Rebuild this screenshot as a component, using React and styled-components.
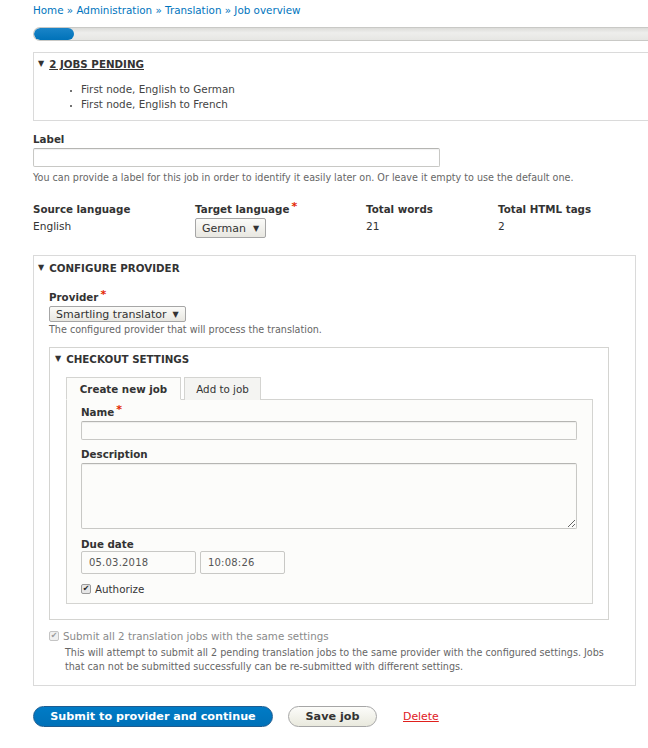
import React from "react";
import styled, { createGlobalStyle } from "styled-components";

const GlobalStyle = createGlobalStyle`
  html, body {
    margin: 0;
    padding: 0;
    background: #fff;
  }
  body {
    font-family: "DejaVu Sans", Verdana, sans-serif;
    color: #333;
    font-size: 10px;
    overflow: hidden;
  }
`;

const Page = styled.div`
  width: 648px;
  height: 748px;
  overflow: hidden;
  box-sizing: border-box;
  padding: 4px 0 0 33px;
`;

const Breadcrumb = styled.nav`
  font-size: 10.35px;
  line-height: 12px;
  color: #0074bd;
  white-space: nowrap;
`;

const Crumb = styled.a`
  color: #0074bd;
  text-decoration: none;
`;

const Progress = styled.div`
  margin-top: 11px;
  width: 640px;
  height: 14px;
  box-sizing: border-box;
  border: 1px solid #c9c9c6;
  border-right: none;
  border-radius: 8px 0 0 8px;
  background: linear-gradient(#dcdcd9, #eeeeec 40%, #e6e6e3);
  overflow: hidden;
`;

const ProgressFill = styled.div`
  height: 100%;
  background: linear-gradient(#1a84c8, #0072b9);
  border-radius: 8px;
`;

const Box = styled.section`
  margin-top: ${(p) => p.$top || 0}px;
  width: ${(p) => p.$width}px;
  box-sizing: border-box;
  border: 1px solid ${(p) => p.$border || "#dadada"};
  background: ${(p) => p.$bg || "#fff"};
  padding-bottom: ${(p) => p.$bottom || 0}px;
`;

const Legend = styled.div`
  display: flex;
  align-items: center;
  gap: 5px;
  padding: ${(p) => p.$pad};
  font-size: 10.3px;
  line-height: 12px;
  font-weight: bold;
  text-transform: uppercase;
  color: #333;
  white-space: nowrap;
  span {
    text-decoration: ${(p) => (p.$link ? "underline" : "none")};
  }
`;

const Arrow = styled.i`
  font-style: normal;
  font-size: 8px;
  line-height: 12px;
  color: #333;
`;

const JobList = styled.ul`
  margin: 12px 0 0;
  padding-left: 47px;
  font-size: 10.4px;
  line-height: 15px;
  color: #444;
  li::marker {
    font-size: 8px;
  }
`;

const BoxBody = styled.div`
  padding: ${(p) => p.$pad};
`;

const FieldLabel = styled.label`
  display: block;
  margin-top: ${(p) => p.$top || 0}px;
  font-size: 10.3px;
  line-height: 12px;
  font-weight: bold;
  color: #333;
  white-space: nowrap;
`;

const Req = styled.sup`
  color: #e32700;
  font-size: 11px;
  vertical-align: 3px;
  margin-left: 2px;
  line-height: 0;
`;

const TextInput = styled.div`
  margin-top: 3px;
  width: ${(p) => p.$width}px;
  height: ${(p) => p.$height || 19}px;
  box-sizing: border-box;
  border: 1px solid #c8c8c5;
  border-top-color: #b5b5b2;
  border-radius: 2px;
  background: ${(p) => p.$bg || "#fff"};
  box-shadow: inset 0 1px 1px rgba(0, 0, 0, 0.06);
`;

const TextArea = styled.textarea`
  display: block;
  margin-top: 3px;
  width: ${(p) => p.$width}px;
  height: 66px;
  box-sizing: border-box;
  border: 1px solid #c8c8c5;
  border-top-color: #b5b5b2;
  border-radius: 2px;
  background: #fcfcfa;
  box-shadow: inset 0 1px 1px rgba(0, 0, 0, 0.06);
  font: inherit;
  outline: none;
`;

const Description = styled.div`
  margin-top: ${(p) => p.$top || 0}px;
  font-size: 9.6px;
  line-height: ${(p) => p.$lh || 12}px;
  color: #666;
  padding-left: ${(p) => p.$indent || 0}px;
`;

const InfoGrid = styled.div`
  margin-top: 19px;
  display: grid;
  grid-template-columns: 162px 171px 132px 1fr;
`;

const InfoCol = styled.div`
  display: flex;
  flex-direction: column;
  align-items: flex-start;
`;

const InfoValue = styled.div`
  margin-top: 5px;
  font-size: 10.6px;
  line-height: 12px;
  color: #333;
`;

const Select = styled.div`
  margin-top: ${(p) => p.$top || 3}px;
  display: inline-flex;
  align-items: center;
  gap: ${(p) => p.$gap || 7}px;
  height: ${(p) => p.$height}px;
  box-sizing: border-box;
  padding: 0 6px;
  border: 1px solid #a6a6a6;
  border-radius: 2px;
  background: linear-gradient(#fbfbf9, #e8e7e1);
  font-size: 11px;
  color: #333;
  white-space: nowrap;
  i {
    font-style: normal;
    font-size: 8px;
  }
`;

const Tabs = styled.div`
  margin-top: 12px;
  display: flex;
  gap: 3px;
`;

const Tab = styled.div`
  width: ${(p) => p.$width}px;
  height: 23px;
  box-sizing: border-box;
  display: flex;
  align-items: center;
  justify-content: center;
  border: 1px solid #d4d4d1;
  border-bottom: ${(p) => (p.$active ? "1px solid #fcfcfa" : "none")};
  margin-bottom: -1px;
  position: relative;
  background: ${(p) => (p.$active ? "#fcfcfa" : "#f4f4f2")};
  font-size: 10.3px;
  font-weight: ${(p) => (p.$active ? "bold" : "normal")};
  color: #333;
`;

const TabPanel = styled.div`
  width: 527px;
  box-sizing: border-box;
  border: 1px solid #d4d4d1;
  background: #fcfcfa;
  padding: 6px 15px 8px 14px;
`;

const DateRow = styled.div`
  margin-top: 1px;
  display: flex;
  gap: 4px;
`;

const DateInput = styled.div`
  width: ${(p) => p.$width}px;
  height: 23px;
  box-sizing: border-box;
  border: 1px solid #c8c8c5;
  border-radius: 2px;
  background: #fcfcfa;
  display: flex;
  align-items: center;
  padding-left: 7px;
  font-size: 10px;
  letter-spacing: 0.2px;
  color: #555;
`;

const CheckRow = styled.div`
  margin-top: ${(p) => p.$top || 0}px;
  display: flex;
  align-items: center;
  gap: 4px;
  font-size: 10.3px;
  line-height: 12px;
  color: ${(p) => (p.$muted ? "#8a8a8a" : "#333")};
`;

const Check = styled.span`
  width: 10px;
  height: 10px;
  box-sizing: border-box;
  border: 1px solid ${(p) => (p.$muted ? "#c4c4c4" : "#9a9a9a")};
  border-radius: 2px;
  background: ${(p) => (p.$muted ? "#f0f0f0" : "#e6e6e6")};
  display: flex;
  align-items: center;
  justify-content: center;
  font-size: 8px;
  line-height: 1;
  color: ${(p) => (p.$muted ? "#9a9a9a" : "#222")};
`;

const Actions = styled.div`
  margin-top: 20px;
  display: flex;
  align-items: center;
`;

const Button = styled.button`
  height: 21px;
  width: ${(p) => p.$width}px;
  margin-right: ${(p) => p.$gap || 0}px;
  box-sizing: border-box;
  border-radius: 12px;
  padding: 0;
  font-family: "DejaVu Sans", Verdana, sans-serif;
  font-weight: bold;
  font-size: 11.2px;
  cursor: pointer;
  border: 1px solid ${(p) => (p.$primary ? "#1e5c90" : "#a6a6a6")};
  color: ${(p) => (p.$primary ? "#fff" : "#333")};
  background: ${(p) =>
    p.$primary
      ? "linear-gradient(#007bc6, #0071b8)"
      : "linear-gradient(#fcfcfa, #e9e9dd)"};
`;

const DeleteLink = styled.a`
  font-size: 10.9px;
  color: #e0201d;
  text-decoration: underline;
`;

export default function App() {
  return (
    <Page>
      <GlobalStyle />
      <Breadcrumb>
        <Crumb href="#">Home</Crumb> » <Crumb href="#">Administration</Crumb> »{" "}
        <Crumb href="#">Translation</Crumb> » <Crumb href="#">Job overview</Crumb>
      </Breadcrumb>

      <Progress>
        <ProgressFill style={{ width: 40 }} />
      </Progress>

      <Box $top={11} $width={625} $bottom={8}>
        <Legend $pad="5px 4px 0" $link>
          <Arrow>▼</Arrow>
          <span>2 jobs pending</span>
        </Legend>
        <JobList>
          <li>First node, English to German</li>
          <li>First node, English to French</li>
        </JobList>
      </Box>

      <FieldLabel $top={12}>Label</FieldLabel>
      <TextInput $width={407} />
      <Description $top={5}>
        You can provide a label for this job in order to identify it easily later on. Or leave it
        empty to use the default one.
      </Description>

      <InfoGrid>
        <InfoCol>
          <FieldLabel>Source language</FieldLabel>
          <InfoValue>English</InfoValue>
        </InfoCol>
        <InfoCol>
          <FieldLabel>
            Target language<Req>*</Req>
          </FieldLabel>
          <Select $height={20}>
            German <i>▼</i>
          </Select>
        </InfoCol>
        <InfoCol>
          <FieldLabel>Total words</FieldLabel>
          <InfoValue>21</InfoValue>
        </InfoCol>
        <InfoCol>
          <FieldLabel>Total HTML tags</FieldLabel>
          <InfoValue>2</InfoValue>
        </InfoCol>
      </InfoGrid>

      <Box $top={17} $width={603} $bottom={11}>
        <Legend $pad="6px 4px 0">
          <Arrow>▼</Arrow>
          <span>Configure provider</span>
        </Legend>
        <BoxBody $pad="0 25px 0 15px">
          <FieldLabel $top={17}>
            Provider<Req>*</Req>
          </FieldLabel>
          <Select $height={16} $gap={6}>
            Smartling translator <i>▼</i>
          </Select>
          <Description $top={2}>The configured provider that will process the translation.</Description>

          <Box $top={11} $width={560} $border="#d4d4d1" $bottom={15}>
            <Legend $pad="5px 5px 0">
              <Arrow>▼</Arrow>
              <span>Checkout settings</span>
            </Legend>
            <BoxBody $pad="0 15px 0 16px">
              <Tabs>
                <Tab $active $width={115}>
                  Create new job
                </Tab>
                <Tab $width={77}>Add to job</Tab>
              </Tabs>
              <TabPanel>
                <FieldLabel>
                  Name<Req>*</Req>
                </FieldLabel>
                <TextInput $width={496} $bg="#fcfcfa" />
                <FieldLabel $top={8}>Description</FieldLabel>
                <TextArea $width={496} readOnly />
                <FieldLabel $top={9}>Due date</FieldLabel>
                <DateRow>
                  <DateInput $width={115}>05.03.2018</DateInput>
                  <DateInput $width={85}>10:08:26</DateInput>
                </DateRow>
                <CheckRow $top={9}>
                  <Check>✔</Check>
                  Authorize
                </CheckRow>
              </TabPanel>
            </BoxBody>
          </Box>

          <CheckRow $top={10} $muted>
            <Check $muted>✔</Check>
            Submit all 2 translation jobs with the same settings
          </CheckRow>
          <Description $top={4} $lh={14} $indent={16}>
            This will attempt to submit all 2 pending translation jobs to the same provider with the
            configured settings. Jobs that can not be submitted successfully can be re-submitted with
            different settings.
          </Description>
        </BoxBody>
      </Box>

      <Actions>
        <Button $primary $width={240} $gap={15}>
          Submit to provider and continue
        </Button>
        <Button $width={89} $gap={26}>
          Save job
        </Button>
        <DeleteLink href="#">Delete</DeleteLink>
      </Actions>
    </Page>
  );
}
